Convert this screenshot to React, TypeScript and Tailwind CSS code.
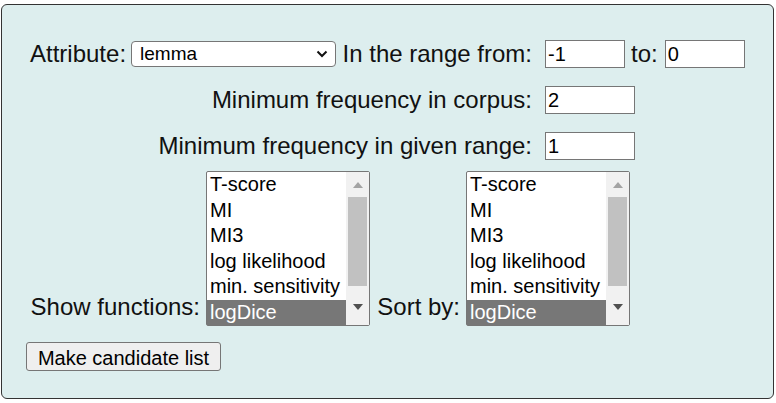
import React, { FC } from 'react';

const functions = ['T-score', 'MI', 'MI3', 'log likelihood', 'min. sensitivity', 'logDice'];

const TextBox: FC<{ value: string; width: string }> = ({ value, width }) => (
  <input
    readOnly
    value={value}
    className={`${width} h-[28px] border border-[#767676] bg-white pl-[2px] text-[20px] text-black outline-none`}
  />
);

const ListBox: FC = () => (
  <div className="flex h-[155px] w-[164px] rounded-[2px] border border-[#767676] bg-white">
    <div className="flex-1">
      {functions.map((f) => (
        <div
          key={f}
          className={`h-[25.5px] pl-[3px] text-[20px] leading-[25px] whitespace-nowrap ${
            f === 'logDice' ? 'bg-[#777777] text-white' : 'text-black'
          }`}
        >
          {f}
        </div>
      ))}
    </div>
    <div className="flex w-[23px] flex-col items-center bg-[#f1f1f1]">
      <div className="flex h-[25px] items-center justify-center">
        <svg width="10" height="6" viewBox="0 0 10 6">
          <path d="M0 6 L5 0 L10 6 Z" fill="#a3a3a3" />
        </svg>
      </div>
      <div className="h-[89px] w-[19px] bg-[#c1c1c1]" />
      <div className="flex flex-1 items-center justify-center pt-[2px]">
        <svg width="10" height="6" viewBox="0 0 10 6">
          <path d="M0 0 L10 0 L5 6 Z" fill="#505050" />
        </svg>
      </div>
    </div>
  </div>
);

export default function App() {
  return (
    <div className="h-[403px] w-[776px] bg-white pl-[1px] pt-[4px] font-['Liberation_Sans',Arial,sans-serif] text-[#111]">
      <div className="h-[395px] w-[773px] rounded-[6px] border border-[#333] bg-[#ddeeee] pt-[35px]">
        {/* range row */}
        <div className="flex h-[28px] items-center">
          <div className="flex w-[530px] items-center justify-between pl-[28px] text-[24px]">
            <span>Attribute:</span>
            <div className="ml-[5px] flex h-[26px] w-[205px] items-center justify-between rounded-[4px] border border-[#767676] bg-white pl-[8px] pr-[7px] text-[19px] text-black">
              <span>lemma</span>
              <svg width="12" height="8" viewBox="0 0 12 8">
                <path d="M1.5 1.5 L6 6 L10.5 1.5" stroke="#111" strokeWidth="2" fill="none" />
              </svg>
            </div>
            <span className="ml-auto">In the range from:</span>
          </div>
          <div className="ml-[13px] flex items-center">
            <TextBox value="-1" width="w-[80px]" />
            <span className="ml-[6px] mr-[7px] text-[24px]">to:</span>
            <TextBox value="0" width="w-[80px]" />
          </div>
        </div>

        {/* corpus frequency */}
        <div className="mt-[18px] flex h-[28px] items-center">
          <div className="w-[530px] text-right text-[24px]">Minimum frequency in corpus:</div>
          <div className="ml-[13px]">
            <TextBox value="2" width="w-[90px]" />
          </div>
        </div>

        {/* range frequency */}
        <div className="mt-[18px] flex h-[28px] items-center">
          <div className="w-[530px] text-right text-[24px]">Minimum frequency in given range:</div>
          <div className="ml-[13px]">
            <TextBox value="1" width="w-[90px]" />
          </div>
        </div>

        {/* functions */}
        <div className="mt-[11px] flex items-end">
          <div className="w-[204px] pb-[1px] pr-[6px] text-right text-[24px]">Show functions:</div>
          <ListBox />
          <div className="w-[96px] pb-[1px] pr-[6px] text-right text-[24px]">Sort by:</div>
          <ListBox />
        </div>

        <div className="mt-[16px] pl-[24px]">
          <button className="h-[29px] w-[195px] rounded-[3px] border border-[#767676] bg-[#efefef] text-[20px] text-black">
            Make candidate list
          </button>
        </div>
      </div>
    </div>
  );
}
